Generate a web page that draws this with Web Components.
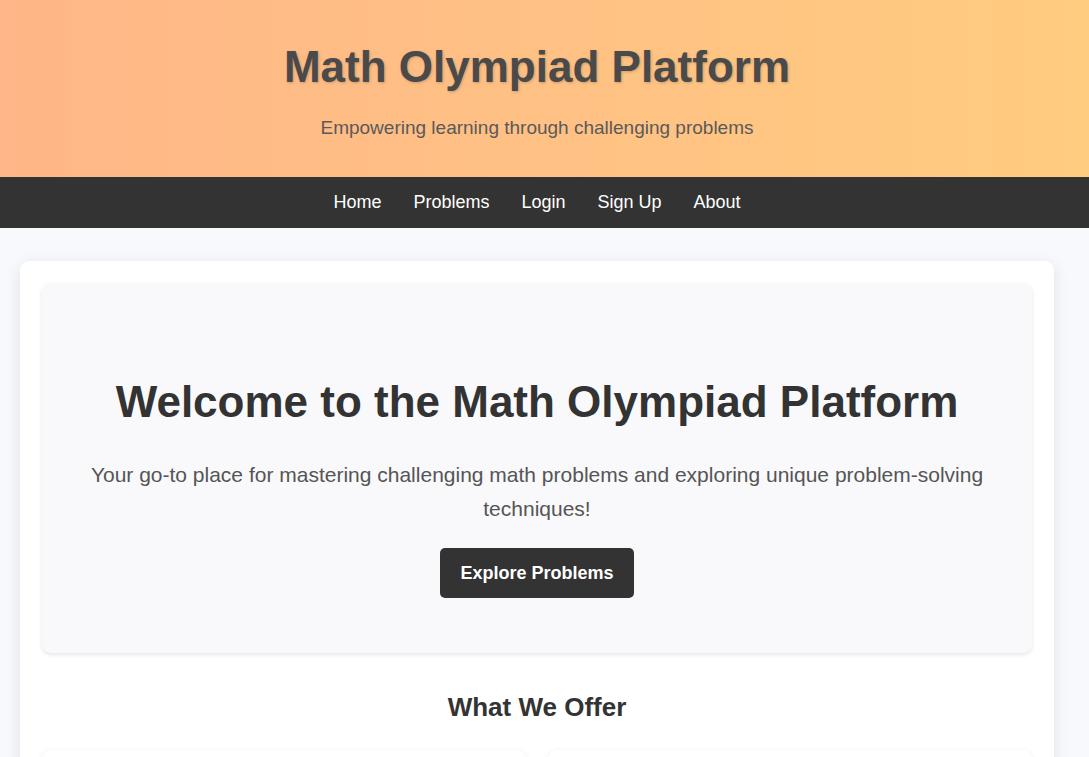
<!DOCTYPE html>
<html lang="en">
<head>
<meta charset="utf-8">
<meta name="viewport" content="width=device-width, initial-scale=1">
<title>Math Olympiad Platform</title>
<style>
  :root { --ink: #333; --gutter: 15px; }
  body { margin: 0; height: 100vh; overflow: hidden; background: #f8f9fd; color: var(--ink);
    font: 18px/29px "Liberation Sans", Arial, sans-serif; }
</style>
</head>
<body>
<site-header>
  <span slot="title">Math Olympiad Platform</span>
  <span slot="tagline">Empowering learning through challenging problems</span>
</site-header>
<site-nav></site-nav>
<page-card>
  <hero-banner>
    <span slot="title">Welcome to the Math Olympiad Platform</span>
    <span slot="text">Your go-to place for mastering challenging math problems and exploring unique problem-solving techniques!</span>
    <span slot="action">Explore Problems</span>
  </hero-banner>
  <offer-section>What We Offer</offer-section>
</page-card>
<script>
const define = (name, html) => customElements.define(name, class extends HTMLElement {
  constructor() {
    super();
    this.attachShadow({ mode: "open" }).innerHTML = html;
  }
});

define("site-header", `
  <style>
    :host { display: block; background: linear-gradient(90deg, #ffb688, #ffcc80); }
    header { padding: 32px var(--gutter) 34px 0; text-align: center; }
    h1 { margin: 0 0 11px; font-size: 44px; line-height: 70px; color: #4a4a4a;
      text-shadow: 1px 1px 3px rgba(0, 0, 0, .2); }
    p { margin: 0; font-size: 19px; line-height: 30px; color: #5a5a5a; }
  </style>
  <header><h1><slot name="title"></slot></h1><p><slot name="tagline"></slot></p></header>`);

define("site-nav", `
  <style>
    :host { display: block; background: var(--ink); }
    ul { display: flex; justify-content: center; gap: 32px; margin: 0; list-style: none;
      padding: 11px var(--gutter) 11px 0; }
    a { color: #fff; text-decoration: none; }
  </style>
  <nav><ul>
    <li><a href="#home">Home</a></li>
    <li><a href="#problems">Problems</a></li>
    <li><a href="#login">Login</a></li>
    <li><a href="#signup">Sign Up</a></li>
    <li><a href="#about">About</a></li>
  </ul></nav>`);

define("page-card", `
  <style>
    :host { display: block; padding: 33px calc(20px + var(--gutter)) 33px 20px; }
    main { padding: 22px; background: #fff; border-radius: 9px;
      box-shadow: 0 4px 16px rgba(0, 0, 0, .1); }
  </style>
  <main><slot></slot></main>`);

define("hero-banner", `
  <style>
    :host { display: block; }
    section { padding: 84px 33px 55px; text-align: center; background: #f9f9fb;
      border-radius: 9px; box-shadow: 0 2px 4px rgba(0, 0, 0, .1); }
    h2 { margin: 0 0 21px; font-size: 44px; line-height: 70px; }
    p { margin: 0 0 22px; font-size: 21px; line-height: 34px; color: #555; }
    button { padding: 0 20px; border: 0; border-radius: 5px; background: var(--ink); color: #fff;
      font: inherit; font-weight: bold; line-height: 50px; display: block; margin: 0 auto; cursor: pointer; }
  </style>
  <section>
    <h2><slot name="title"></slot></h2>
    <p><slot name="text"></slot></p>
    <button type="button"><slot name="action"></slot></button>
  </section>`);

define("offer-card", `
  <style>
    :host { display: block; min-height: 180px; background: #fff; border-radius: 9px;
      box-shadow: 0 2px 6px rgba(0, 0, 0, .1); }
  </style>
  <slot></slot>`);

define("offer-section", `
  <style>
    :host { display: block; }
    h2 { margin: 33px 0 22px; font-size: 26px; line-height: 42px; text-align: center; }
    div { display: grid; grid-template-columns: 1fr 1fr; gap: 22px; }
  </style>
  <section>
    <h2><slot></slot></h2>
    <div><offer-card></offer-card><offer-card></offer-card></div>
  </section>`);
</script>
</body>
</html>
